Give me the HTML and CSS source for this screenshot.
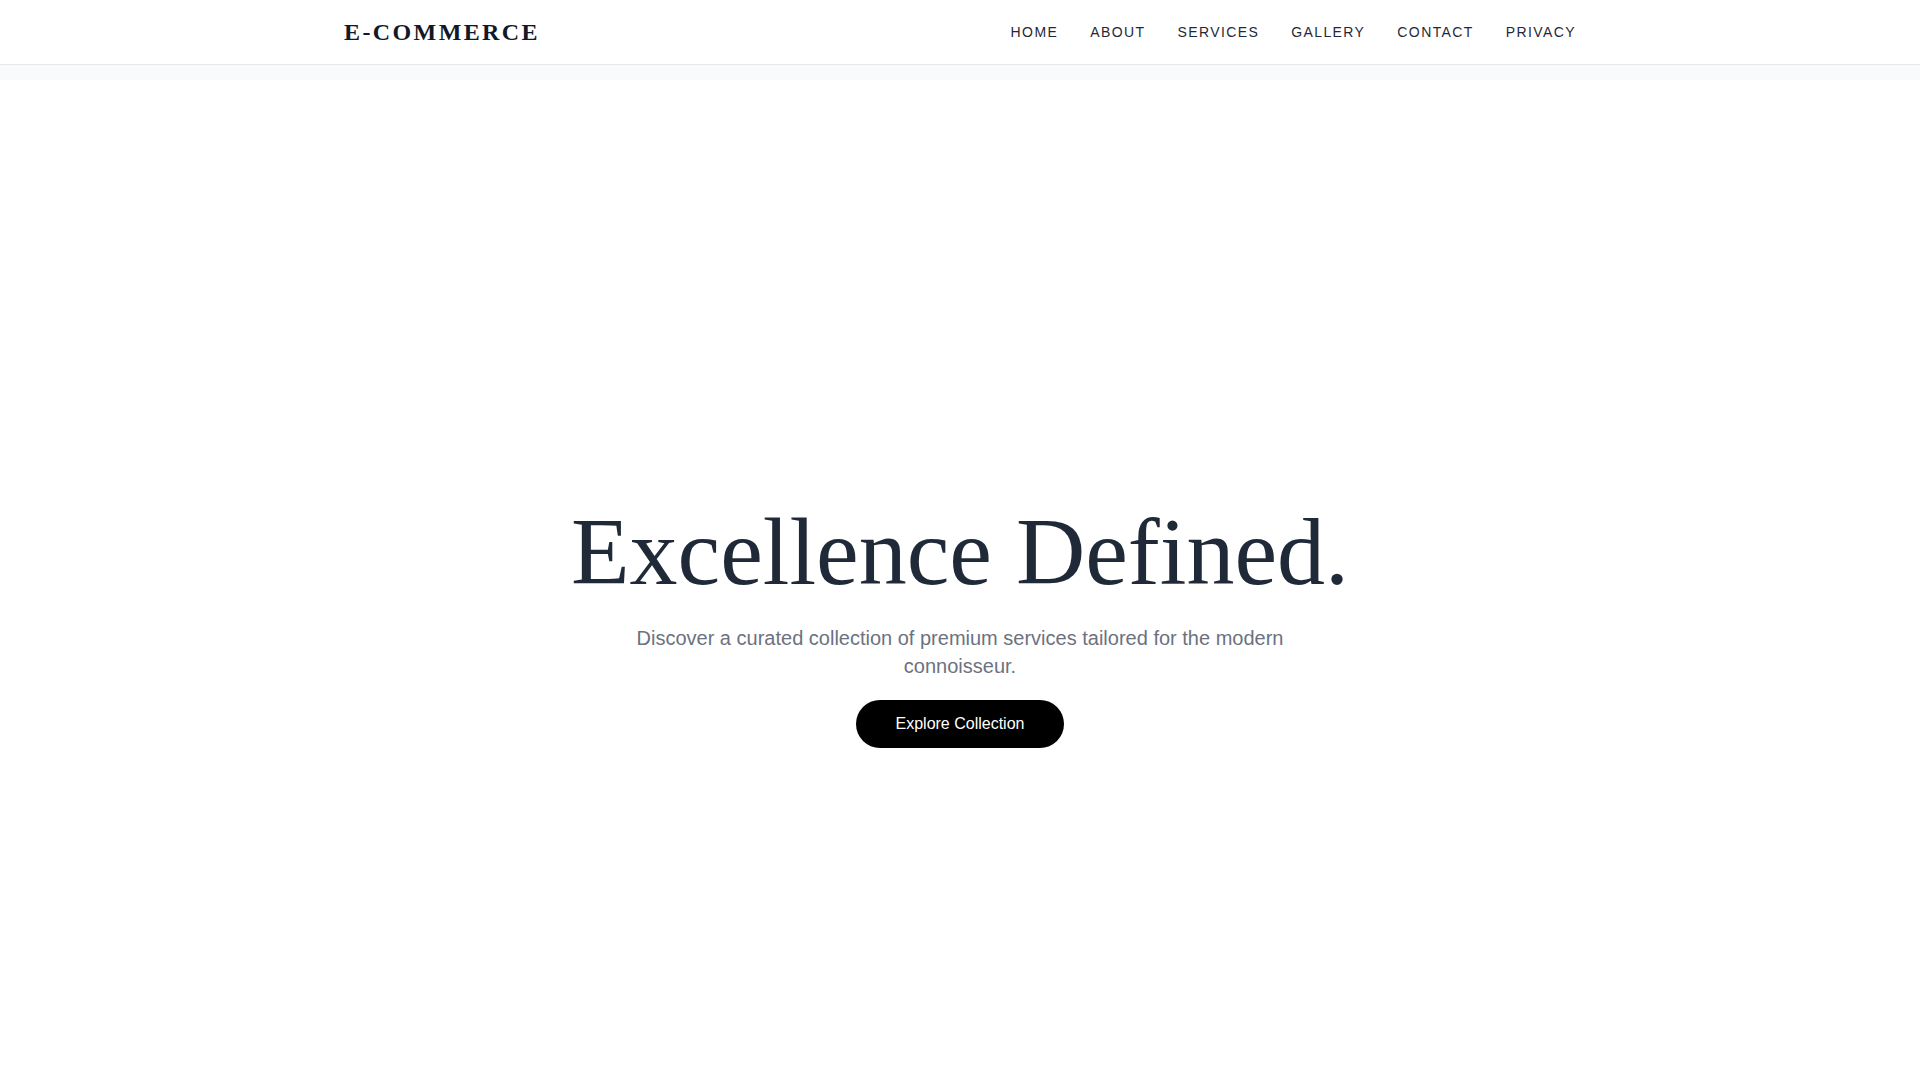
FILE: index.html
```html
<!DOCTYPE html>
<html lang="en">
<head>
<meta charset="utf-8">
<title>E-Commerce</title>
<link rel="stylesheet" href="styles.css">
</head>
<body>
<header class="site-header">
  <div class="container header-inner">
    <a class="logo" href="#">E-COMMERCE</a>
    <nav class="nav">
      <a href="#">HOME</a>
      <a href="#">ABOUT</a>
      <a href="#">SERVICES</a>
      <a href="#">GALLERY</a>
      <a href="#">CONTACT</a>
      <a href="#">PRIVACY</a>
    </nav>
  </div>
</header>
<div class="strip"></div>
<main class="hero">
  <h1 class="hero-title">Excellence Defined.</h1>
  <p class="hero-sub">Discover a curated collection of premium services tailored for the modern connoisseur.</p>
  <a class="btn" href="#">Explore Collection</a>
</main>
</body>
</html>
```

FILE: styles.css
```css
* { box-sizing: border-box; }
html, body { margin: 0; padding: 0; }
body {
  background: #ffffff;
  font-family: "Liberation Sans", Arial, sans-serif;
  color: #1f2937;
  overflow: hidden;
  height: 1080px;
}
a { text-decoration: none; color: inherit; }

.site-header {
  height: 65px;
  border-bottom: 1px solid #e5e7eb;
  background: #ffffff;
}
.container {
  max-width: 1280px;
  margin: 0 auto;
  padding: 0 24px;
}
.header-inner {
  height: 64px;
  display: flex;
  align-items: center;
  justify-content: space-between;
}
.logo {
  font-family: "Liberation Serif", "Times New Roman", serif;
  font-weight: 700;
  font-size: 24px;
  letter-spacing: 0.1em;
  color: #111827;
  line-height: 32px;
}
.nav {
  display: flex;
  gap: 32px;
}
.nav a {
  font-size: 14px;
  letter-spacing: 0.1em;
  color: #1f2937;
  line-height: 20px;
}
.strip {
  height: 15px;
  background: #f9fafb;
}
.hero {
  display: flex;
  flex-direction: column;
  align-items: center;
  text-align: center;
  padding-top: 424px;
}
.hero-title {
  margin: 0 0 24px;
  font-family: "Liberation Serif", "Times New Roman", serif;
  font-weight: 400;
  font-size: 96px;
  line-height: 1;
  color: #1f2937;
}
.hero-sub {
  margin: 0 0 20px;
  max-width: 672px;
  font-size: 20px;
  line-height: 28px;
  color: #6b7280;
}
.btn {
  display: inline-block;
  background: #000000;
  color: #ffffff;
  font-size: 16px;
  line-height: 24px;
  padding: 12px 40px;
  border-radius: 9999px;
}
```
